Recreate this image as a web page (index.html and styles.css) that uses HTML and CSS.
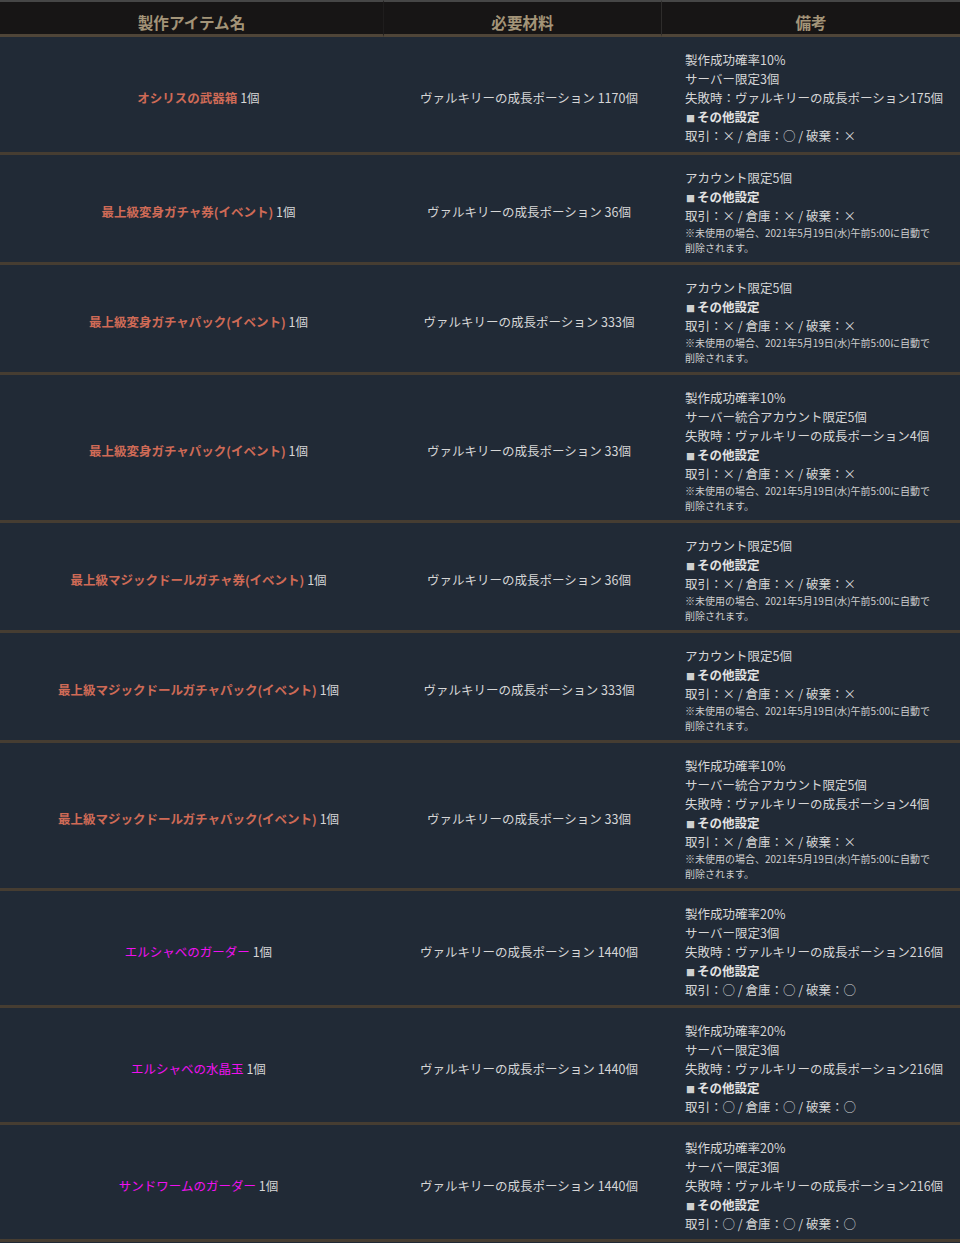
FILE: index.html
```html
<!DOCTYPE html>
<html lang="ja">
<head>
<meta charset="utf-8">
<title>製作アイテム</title>
<link rel="stylesheet" href="styles.css">
</head>
<body>
<table class="craft">
  <colgroup><col class="c-item"><col class="c-mat"><col class="c-note"></colgroup>
  <thead>
    <tr><th>製作アイテム名</th><th class="th-mat">必要材料</th><th class="th-note">備考</th></tr>
  </thead>
  <tbody>
    <tr>
      <td class="item"><span class="name">オシリスの武器箱</span> 1個</td>
      <td class="mat">ヴァルキリーの成長ポーション 1170個</td>
      <td class="note">製作成功確率10%<br>サーバー限定3個<br>失敗時：ヴァルキリーの成長ポーション175個<br><b class="sub"><span class="sq">■</span>その他設定</b><br>取引：× / 倉庫：○ / 破棄：×</td>
    </tr>
    <tr>
      <td class="item"><span class="name">最上級変身ガチャ券(イベント)</span> 1個</td>
      <td class="mat">ヴァルキリーの成長ポーション 36個</td>
      <td class="note">アカウント限定5個<br><b class="sub"><span class="sq">■</span>その他設定</b><br>取引：× / 倉庫：× / 破棄：×<div class="warn">※未使用の場合、2021年5月19日(水)午前5:00に自動で<br>削除されます。</div></td>
    </tr>
    <tr>
      <td class="item"><span class="name">最上級変身ガチャパック(イベント)</span> 1個</td>
      <td class="mat">ヴァルキリーの成長ポーション 333個</td>
      <td class="note">アカウント限定5個<br><b class="sub"><span class="sq">■</span>その他設定</b><br>取引：× / 倉庫：× / 破棄：×<div class="warn">※未使用の場合、2021年5月19日(水)午前5:00に自動で<br>削除されます。</div></td>
    </tr>
    <tr>
      <td class="item"><span class="name">最上級変身ガチャパック(イベント)</span> 1個</td>
      <td class="mat">ヴァルキリーの成長ポーション 33個</td>
      <td class="note">製作成功確率10%<br>サーバー統合アカウント限定5個<br>失敗時：ヴァルキリーの成長ポーション4個<br><b class="sub"><span class="sq">■</span>その他設定</b><br>取引：× / 倉庫：× / 破棄：×<div class="warn">※未使用の場合、2021年5月19日(水)午前5:00に自動で<br>削除されます。</div></td>
    </tr>
    <tr>
      <td class="item"><span class="name">最上級マジックドールガチャ券(イベント)</span> 1個</td>
      <td class="mat">ヴァルキリーの成長ポーション 36個</td>
      <td class="note">アカウント限定5個<br><b class="sub"><span class="sq">■</span>その他設定</b><br>取引：× / 倉庫：× / 破棄：×<div class="warn">※未使用の場合、2021年5月19日(水)午前5:00に自動で<br>削除されます。</div></td>
    </tr>
    <tr>
      <td class="item"><span class="name">最上級マジックドールガチャパック(イベント)</span> 1個</td>
      <td class="mat">ヴァルキリーの成長ポーション 333個</td>
      <td class="note">アカウント限定5個<br><b class="sub"><span class="sq">■</span>その他設定</b><br>取引：× / 倉庫：× / 破棄：×<div class="warn">※未使用の場合、2021年5月19日(水)午前5:00に自動で<br>削除されます。</div></td>
    </tr>
    <tr>
      <td class="item"><span class="name">最上級マジックドールガチャパック(イベント)</span> 1個</td>
      <td class="mat">ヴァルキリーの成長ポーション 33個</td>
      <td class="note">製作成功確率10%<br>サーバー統合アカウント限定5個<br>失敗時：ヴァルキリーの成長ポーション4個<br><b class="sub"><span class="sq">■</span>その他設定</b><br>取引：× / 倉庫：× / 破棄：×<div class="warn">※未使用の場合、2021年5月19日(水)午前5:00に自動で<br>削除されます。</div></td>
    </tr>
    <tr class="short">
      <td class="item"><span class="name rare">エルシャベのガーダー</span> 1個</td>
      <td class="mat">ヴァルキリーの成長ポーション 1440個</td>
      <td class="note">製作成功確率20%<br>サーバー限定3個<br>失敗時：ヴァルキリーの成長ポーション216個<br><b class="sub"><span class="sq">■</span>その他設定</b><br>取引：○ / 倉庫：○ / 破棄：○</td>
    </tr>
    <tr class="short">
      <td class="item"><span class="name rare">エルシャベの水晶玉</span> 1個</td>
      <td class="mat">ヴァルキリーの成長ポーション 1440個</td>
      <td class="note">製作成功確率20%<br>サーバー限定3個<br>失敗時：ヴァルキリーの成長ポーション216個<br><b class="sub"><span class="sq">■</span>その他設定</b><br>取引：○ / 倉庫：○ / 破棄：○</td>
    </tr>
    <tr class="short">
      <td class="item"><span class="name rare">サンドワームのガーダー</span> 1個</td>
      <td class="mat">ヴァルキリーの成長ポーション 1440個</td>
      <td class="note">製作成功確率20%<br>サーバー限定3個<br>失敗時：ヴァルキリーの成長ポーション216個<br><b class="sub"><span class="sq">■</span>その他設定</b><br>取引：○ / 倉庫：○ / 破棄：○</td>
    </tr>
  </tbody>
</table>
</body>
</html>
```

FILE: styles.css
```css
html, body {
  margin: 0;
  padding: 0;
  background: #212a36;
}

.craft {
  width: 960px;
  table-layout: fixed;
  border-collapse: separate;
  border-spacing: 0;
  font-family: "Noto Sans CJK JP", "Noto Sans", sans-serif;
  font-size: 12.5px;
  color: #d6d6d6;
}

.c-item { width: 383px; }
.c-mat { width: 278px; }
.c-note { width: 299px; }

.craft th {
  background: #171515;
  color: #a39478;
  font-size: 15.6px;
  font-weight: bold;
  line-height: 24px;
  padding: 8px 0 0;
  height: 24px;
  border-top: 2px solid #464646;
  border-bottom: 3px solid #4f4538;
  text-align: center;
}

.craft .th-mat {
  border-left: 1px solid #1f1d1d;
}

.craft .th-note {
  border-left: 1px solid #2e2c2b;
}

.craft td {
  background: #212a36;
  line-height: 19px;
  padding: 13px 10px 7px 24px;
  border-bottom: 3px solid #463d32;
  vertical-align: middle;
}

.craft .short td {
  padding-bottom: 6px;
}

.item, .mat {
  text-align: center;
}

.name {
  color: #cf6a56;
  font-weight: bold;
}

.name.rare {
  color: #f010f0;
  font-weight: normal;
}

.note {
  text-align: left;
  white-space: nowrap;
}

.sub {
  font-weight: bold;
  color: #e2e2e2;
}

.sq {
  font-size: 9px;
  line-height: 0;
  color: #d0d0d0;
  margin: 0 2px 0 1px;
}

.warn {
  font-size: 10px;
  line-height: 15px;
  color: #cfcfcf;
}
```
